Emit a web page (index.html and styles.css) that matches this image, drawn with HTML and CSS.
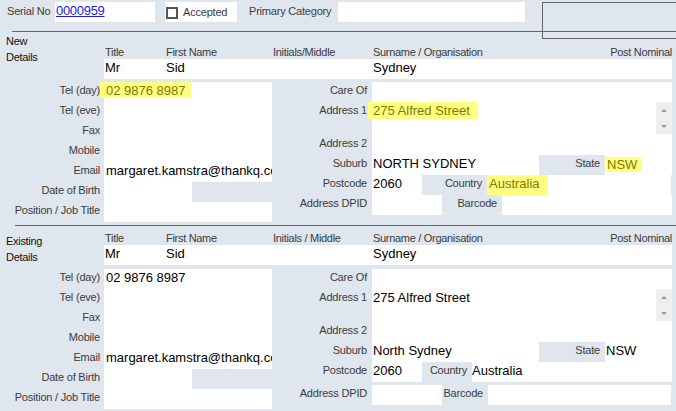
FILE: index.html
```html
<!DOCTYPE html>
<html lang="en">
<head>
    <meta charset="UTF-8">
    <title>Contact Details</title>
    <link rel="stylesheet" href="styles.css">
</head>
<body>
    <div class="topbar">
        <span class="top-label serial-label">Serial No</span>
        <div class="box serial"><a href="#">0000959</a></div>
        <div class="box accepted"><span class="check"></span>Accepted</div>
        <span class="top-label primary-label">Primary Category</span>
        <div class="box primary"></div>
    </div>
    <div class="corner-box"></div>
    <div class="rule rule-new"></div>

    <section class="details details-new">
        <div class="details-head">
            <div class="details-title">New<br>Details</div>
            <div class="names">
                <div class="name-cols name-labels">
                    <span>Title</span><span>First Name</span><span>Initials/Middle</span><span>Surname / Organisation</span><span class="post">Post Nominal</span>
                </div>
                <div class="name-cols name-values">
                    <span>Mr</span><span>Sid</span><span></span><span>Sydney</span><span></span>
                </div>
            </div>
        </div>
        <div class="details-body">
            <div class="contact">
                <label>Tel (day)</label><div class="val"><span class="hl hl-tel">02 9876 8987</span></div>
                <label>Tel (eve)</label><div class="val"></div>
                <label>Fax</label><div class="val"></div>
                <label>Mobile</label><div class="val"></div>
                <label>Email</label><div class="val clip">margaret.kamstra@thankq.com.au</div>
                <label>Date of Birth</label><div class="val short"></div>
                <label>Position / Job Title</label><div class="val"></div>
            </div>
            <div class="address">
                <label>Care Of</label><div class="val"></div>
                <label>Address 1</label>
                <div class="val memo">
                    <div class="memo-text"><span class="hl hl-addr">275 Alfred Street</span></div>
                    <div class="scroll"><span class="arrow-up"></span><span class="arrow-down"></span></div>
                </div>
                <label>Address 2</label><div class="val"></div>
                <label>Suburb</label>
                <div class="split">
                    <div class="val w-suburb">NORTH SYDNEY</div>
                    <label class="inner w-state">State</label>
                    <div class="val fill"><span class="hl hl-state">NSW</span></div>
                </div>
                <label>Postcode</label>
                <div class="split">
                    <div class="val w-postcode">2060</div>
                    <label class="inner w-country">Country</label>
                    <div class="val bare w-country-val"><span class="hl hl-country">Australia</span></div>
                </div>
                <label>Address DPID</label>
                <div class="split">
                    <div class="val w-dpid"></div>
                    <label class="inner w-barcode">Barcode</label>
                    <div class="val fill"></div>
                </div>
            </div>
        </div>
    </section>

    <div class="rule rule-existing"></div>

    <section class="details details-existing">
        <div class="details-head">
            <div class="details-title">Existing<br>Details</div>
            <div class="names">
                <div class="name-cols name-labels">
                    <span>Title</span><span>First Name</span><span>Initials / Middle</span><span>Surname / Organisation</span><span class="post">Post Nominal</span>
                </div>
                <div class="name-cols name-values">
                    <span>Mr</span><span>Sid</span><span></span><span>Sydney</span><span></span>
                </div>
            </div>
        </div>
        <div class="details-body">
            <div class="contact">
                <label>Tel (day)</label><div class="val">02 9876 8987</div>
                <label>Tel (eve)</label><div class="val"></div>
                <label>Fax</label><div class="val"></div>
                <label>Mobile</label><div class="val"></div>
                <label>Email</label><div class="val clip">margaret.kamstra@thankq.com.au</div>
                <label>Date of Birth</label><div class="val short"></div>
                <label>Position / Job Title</label><div class="val"></div>
            </div>
            <div class="address">
                <label>Care Of</label><div class="val"></div>
                <label>Address 1</label>
                <div class="val memo">
                    <div class="memo-text">275 Alfred Street</div>
                    <div class="scroll"><span class="arrow-up"></span><span class="arrow-down"></span></div>
                </div>
                <label>Address 2</label><div class="val"></div>
                <label>Suburb</label>
                <div class="split">
                    <div class="val w-suburb">North Sydney</div>
                    <label class="inner w-state">State</label>
                    <div class="val fill">NSW</div>
                </div>
                <label>Postcode</label>
                <div class="split">
                    <div class="val w-postcode">2060</div>
                    <label class="inner w-country-old">Country</label>
                    <div class="val bare fill">Australia</div>
                </div>
                <label class="dpid">Address DPID</label>
                <div class="split dpid">
                    <div class="val w-dpid"></div>
                    <label class="inner w-barcode-old">Barcode</label>
                    <div class="val w-barcode-val"></div>
                </div>
            </div>
        </div>
    </section>
</body>
</html>
```

FILE: styles.css
```css
* {
    box-sizing: border-box;
}
body {
    margin: 0;
    width: 676px;
    height: 411px;
    overflow: hidden;
    position: relative;
    background-color: #dfe6ee;
    font-family: "Liberation Sans", Arial, sans-serif;
    font-size: 11px;
    color: #3c3c3c;
}
label {
    letter-spacing: -0.2px;
}

/* top bar */
.topbar {
    display: flex;
    height: 31px;
    padding-top: 2px;
}
.top-label {
    line-height: 18px;
    letter-spacing: -0.2px;
}
.serial-label {
    width: 55px;
    padding-left: 7px;
}
.primary-label {
    width: 101px;
    padding-left: 12px;
}
.box {
    background: #fff;
    height: 20px;
}
.serial {
    width: 100px;
    padding-left: 1px;
}
.serial a {
    font-size: 13px;
    line-height: 17px;
    letter-spacing: -0.3px;
    color: #1a1ae0;
}
.accepted {
    width: 72px;
    margin-left: 10px;
    display: flex;
    align-items: center;
    line-height: 18px;
    letter-spacing: -0.2px;
}
.check {
    width: 12px;
    height: 12px;
    margin: 2px 5px 0 1px;
    border: 2px solid #555;
    background: #fff;
}
.primary {
    width: 187px;
}
.corner-box {
    position: absolute;
    top: 2px;
    left: 542px;
    width: 140px;
    height: 37px;
    border: 1px solid #666;
}

.rule {
    height: 1px;
    background: #666;
}
.rule-new {
    margin-left: 12px;
}
.rule-existing {
    margin-left: 15px;
    margin-top: 3px;
}

/* sections */
.details-head {
    display: flex;
}
.details-title {
    width: 104px;
    padding-left: 6px;
    line-height: 16px;
    color: #111;
    letter-spacing: -0.3px;
}
.details-new .details-title {
    padding-top: 1px;
}
.details-existing .details-title {
    padding-top: 7px;
}
.names {
    width: 568px;
}
.details-new .names {
    padding-top: 14px;
}
.details-existing .names {
    padding-top: 6px;
}
.name-cols {
    display: grid;
    grid-template-columns: 61px 107px 100px 1fr auto;
}
.name-cols span {
    padding-left: 1px;
    white-space: nowrap;
}
.name-labels {
    height: 13px;
    line-height: 13px;
    letter-spacing: -0.3px;
}
.name-labels .post {
    padding-left: 0;
}
.name-values {
    height: 20px;
    background: #fff;
    font-size: 13px;
    line-height: 17px;
    color: #000;
}

.details-body {
    display: flex;
}
.details-new .details-body {
    margin-top: 3px;
}
.details-existing .details-body {
    margin-top: 4px;
}

.val {
    background: #fff;
    height: 20px;
    font-size: 13px;
    line-height: 17px;
    color: #000;
    white-space: nowrap;
}
.clip {
    overflow: hidden;
}

.contact {
    display: grid;
    grid-template-columns: 104px 168px;
    grid-auto-rows: 20px;
}
.contact label {
    text-align: right;
    padding-right: 4px;
    line-height: 17px;
    white-space: nowrap;
}
.contact .val {
    padding-left: 2px;
}
.contact .short {
    width: 88px;
}

.address {
    display: grid;
    grid-template-columns: 100px 300px;
    grid-template-rows: 20px 33px 20px 20px 20px 20px;
}
.address label {
    text-align: right;
    padding-right: 5px;
    line-height: 17px;
    white-space: nowrap;
}
.address .val {
    padding-left: 1px;
}
.address .memo {
    height: 33px;
    display: flex;
}
.memo-text {
    flex: 1;
}
.scroll {
    width: 16px;
    height: 32px;
    background: #efefef;
    display: flex;
    flex-direction: column;
    justify-content: space-between;
    align-items: center;
    padding: 7px 0 6px;
}
.arrow-up {
    width: 0;
    height: 0;
    border-left: 3px solid transparent;
    border-right: 3px solid transparent;
    border-bottom: 3px solid #9a9a9a;
}
.arrow-down {
    width: 0;
    height: 0;
    border-left: 3px solid transparent;
    border-right: 3px solid transparent;
    border-top: 3px solid #9a9a9a;
}

.split {
    display: flex;
}
.address .split .inner {
    padding-right: 5px;
}
.address .val.bare {
    padding-left: 0;
}
.fill {
    flex: 1;
}
.w-suburb { width: 167px; }
.w-state { width: 66px; }
.w-postcode { width: 50px; }
.w-country { width: 65px; }
.w-country-val { width: 184px; }
.w-country-old { width: 50px; }
.w-dpid { width: 70px; }
.w-barcode { width: 60px; }
.w-barcode-old { width: 46px; }
.w-barcode-val { width: 183px; }

.address .dpid {
    margin-top: 3px;
    height: 19px;
}
.details-existing .address {
    grid-template-rows: 20px 33px 20px 20px 20px 22px;
}

/* highlighted changes */
.hl {
    background: #ffff80;
    color: #7f7a00;
}
.hl-tel {
    margin-left: -6px;
    padding: 1px 5px 0 6px;
}
.hl-addr {
    display: inline-block;
    margin-left: -5px;
    padding: 0 8px 0 5px;
}
.hl-state {
    display: inline-block;
    margin-top: 2px;
    line-height: 15px;
    padding: 0 4px 0 1px;
}
.hl-country {
    display: inline-block;
    height: 20px;
    padding: 0 7px 0 2px;
}
```
